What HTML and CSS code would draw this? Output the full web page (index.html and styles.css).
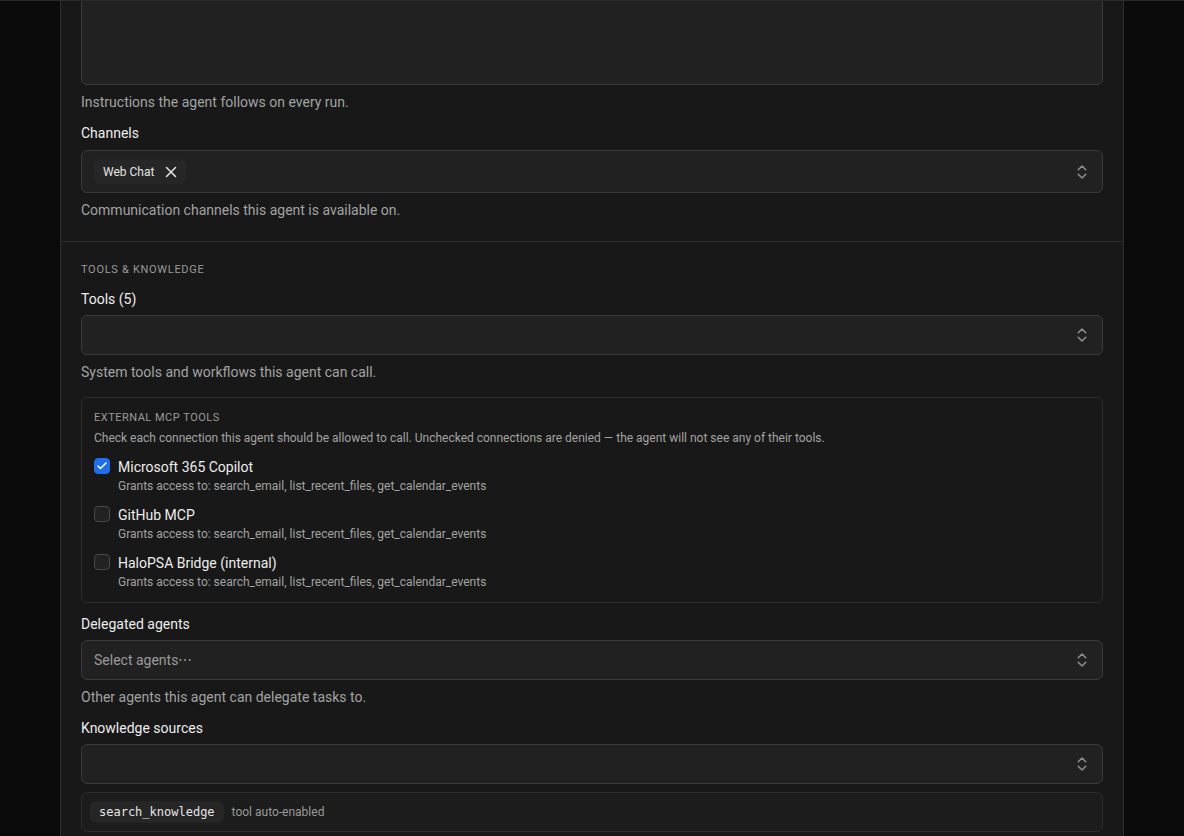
FILE: index.html
```html
<!DOCTYPE html>
<html>
<head>
<meta charset="utf-8">
<link rel="stylesheet" href="styles.css">
</head>
<body>
<div class="topline"></div>
<div class="page">
  <div class="card">
    <section class="section first">
      <div class="field">
        <div class="textarea"></div>
        <p class="help">Instructions the agent follows on every run.</p>
      </div>
      <div class="field">
        <label class="label">Channels</label>
        <div class="select tall">
          <span class="chip">Web Chat
            <svg class="x" viewBox="0 0 24 24" width="18" height="18"><path d="M18 6 6 18M6 6l12 12" fill="none" stroke="currentColor" stroke-width="2" stroke-linecap="round"/></svg>
          </span>
          <svg class="chev" viewBox="0 0 24 24" width="18" height="18"><path d="m7 15 5 5 5-5M7 9l5-5 5 5" fill="none" stroke="currentColor" stroke-width="2" stroke-linecap="round" stroke-linejoin="round"/></svg>
        </div>
        <p class="help">Communication channels this agent is available on.</p>
      </div>
    </section>
    <section class="section second">
      <h3 class="eyebrow">TOOLS &amp; KNOWLEDGE</h3>
      <div class="field">
        <label class="label">Tools (5)</label>
        <div class="select">
          <span class="placeholder"></span>
          <svg class="chev" viewBox="0 0 24 24" width="18" height="18"><path d="m7 15 5 5 5-5M7 9l5-5 5 5" fill="none" stroke="currentColor" stroke-width="2" stroke-linecap="round" stroke-linejoin="round"/></svg>
        </div>
        <p class="help">System tools and workflows this agent can call.</p>
      </div>
      <div class="mcp">
        <div class="mcp-title">EXTERNAL MCP TOOLS</div>
        <div class="mcp-desc">Check each connection this agent should be allowed to call. Unchecked connections are denied — the agent will not see any of their tools.</div>
        <div class="mcp-list">
          <div class="mcp-item">
            <span class="cb checked"><svg viewBox="0 0 24 24" width="12" height="12"><path d="M20 6 9 17l-5-5" fill="none" stroke="#fff" stroke-width="3" stroke-linecap="round" stroke-linejoin="round"/></svg></span>
            <div>
              <div class="mcp-name">Microsoft 365 Copilot</div>
              <div class="mcp-sub">Grants access to: search_email, list_recent_files, get_calendar_events</div>
            </div>
          </div>
          <div class="mcp-item">
            <span class="cb"></span>
            <div>
              <div class="mcp-name">GitHub MCP</div>
              <div class="mcp-sub">Grants access to: search_email, list_recent_files, get_calendar_events</div>
            </div>
          </div>
          <div class="mcp-item">
            <span class="cb"></span>
            <div>
              <div class="mcp-name">HaloPSA Bridge (internal)</div>
              <div class="mcp-sub">Grants access to: search_email, list_recent_files, get_calendar_events</div>
            </div>
          </div>
        </div>
      </div>
      <div class="field">
        <label class="label">Delegated agents</label>
        <div class="select">
          <span class="placeholder">Select agents⋯</span>
          <svg class="chev" viewBox="0 0 24 24" width="18" height="18"><path d="m7 15 5 5 5-5M7 9l5-5 5 5" fill="none" stroke="currentColor" stroke-width="2" stroke-linecap="round" stroke-linejoin="round"/></svg>
        </div>
        <p class="help">Other agents this agent can delegate tasks to.</p>
      </div>
      <div class="field">
        <label class="label">Knowledge sources</label>
        <div class="select">
          <span class="placeholder"></span>
          <svg class="chev" viewBox="0 0 24 24" width="18" height="18"><path d="m7 15 5 5 5-5M7 9l5-5 5 5" fill="none" stroke="currentColor" stroke-width="2" stroke-linecap="round" stroke-linejoin="round"/></svg>
        </div>
        <div class="autobox">
          <code class="code">search_knowledge</code>
          <span class="auto">tool auto-enabled</span>
        </div>
      </div>
    </section>
  </div>
</div>
</body>
</html>
```
FILE: styles.css
```css
* { box-sizing: border-box; }
html, body { margin: 0; padding: 0; }
body {
  background: #0a0a0a;
  font-family: Roboto, "Liberation Sans", sans-serif;
  color: #e8e8e8;
  height: 836px;
  overflow: hidden;
}
.topline {
  height: 1px;
  background: #2a2a2a;
  position: relative;
  z-index: 2;
}
.page {
  width: 1064px;
  margin: -41px auto 0;
}
.card {
  background: #181818;
  border-left: 1px solid #2e2e2e;
  border-right: 1px solid #2e2e2e;
}
.section {
  padding: 20px;
  display: flex;
  flex-direction: column;
}
.section.first {
  padding-top: 0;
  padding-bottom: 22px;
  border-bottom: 1px solid #2e2e2e;
  gap: 13px;
}
.section.second {
  padding-top: 21px;
  padding-bottom: 20px;
}
.field { display: flex; flex-direction: column; }
.textarea {
  height: 125px;
  background: #212121;
  border: 1px solid #3a3a3a;
  border-radius: 6px;
}
.help {
  margin: 8px 0 0;
  font-size: 14px;
  line-height: 18px;
  color: #a3a3a3;
}
.label {
  font-size: 14px;
  line-height: 18px;
  color: #ededed;
  margin-bottom: 8px;
}
.second .label { margin-bottom: 7px; }
.select {
  height: 40px;
  background: #212121;
  border: 1px solid #3a3a3a;
  border-radius: 6px;
  display: flex;
  align-items: center;
  padding: 0 11px 0 12px;
}
.select.tall { height: 43px; }
.placeholder {
  flex: 1;
  font-size: 14px;
  color: #9a9a9a;
}
.chev { color: #8f8f8f; margin-left: auto; }
.chip {
  display: inline-flex;
  align-items: center;
  gap: 8px;
  height: 25px;
  padding: 0 6px 0 9px;
  background: #262626;
  border-radius: 5px;
  font-size: 12px;
  color: #e5e5e5;
}
.chip .x { color: #e5e5e5; }
.eyebrow {
  margin: 0 0 13px;
  font-size: 11px;
  font-weight: 400;
  letter-spacing: 0.7px;
  line-height: 14px;
  color: #9a9a9a;
}
.second .field + .mcp { margin-top: 16px; }
.second .field + .field { margin-top: 13px; }
.mcp {
  border: 1px solid #2e2e2e;
  border-radius: 6px;
  padding: 13px 12px 12px;
}
.mcp + .field { margin-top: 12px; }
.mcp-title {
  font-size: 11px;
  letter-spacing: 0.5px;
  color: #9a9a9a;
  line-height: 14px;
}
.mcp-desc {
  margin-top: 5px;
  font-size: 12px;
  color: #a3a3a3;
  line-height: 16px;
}
.mcp-list { display: flex; flex-direction: column; gap: 12px; margin-top: 12px; }
.mcp-item { display: flex; gap: 8px; align-items: flex-start; }
.cb {
  width: 16px; height: 16px;
  border: 1px solid #4a4a4a;
  background: #222;
  border-radius: 4px;
  display: flex; align-items: center; justify-content: center;
  flex-shrink: 0;
}
.cb.checked { background: #1f6feb; border-color: #1f6feb; }
.mcp-name { font-size: 14px; line-height: 18px; color: #ededed; }
.mcp-sub { font-size: 12px; line-height: 16px; color: #a3a3a3; margin-top: 2px; }
.autobox {
  margin-top: 8px;
  height: 40px;
  border: 1px solid #2e2e2e;
  border-radius: 6px;
  background: #1c1c1c;
  display: flex;
  align-items: center;
  padding: 0 8px;
  gap: 8px;
}
.code {
  font-family: "DejaVu Sans Mono", "Liberation Mono", monospace;
  font-size: 12px;
  line-height: 14px;
  background: #262626;
  color: #e5e5e5;
  padding: 4px 9px;
  border-radius: 6px;
}
.auto { font-size: 12px; color: #9a9a9a; }
```
